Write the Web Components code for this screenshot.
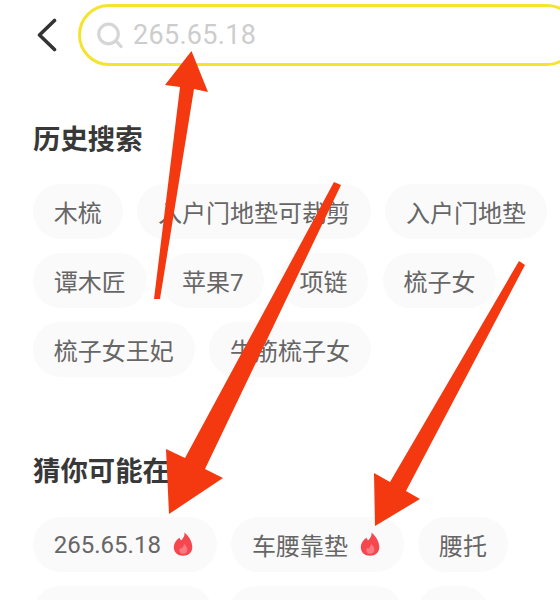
<!DOCTYPE html>
<html lang="zh">
<head>
<meta charset="utf-8">
<title>搜索</title>
<style>
  html, body { margin: 0; height: 600px; overflow: hidden; background: #fff; }
  body { position: relative; font-family: Roboto, "Noto Sans CJK SC", sans-serif; }
</style>
</head>
<body>
<search-bar placeholder="265.65.18"></search-bar>

<tag-section heading="历史搜索" style="--top: 58px">
  <search-chip>木梳</search-chip>
  <search-chip>入户门地垫可裁剪</search-chip>
  <search-chip>入户门地垫</search-chip>
  <search-chip>谭木匠</search-chip>
  <search-chip>苹果7</search-chip>
  <search-chip>项链</search-chip>
  <search-chip>梳子女</search-chip>
  <search-chip>梳子女王妃</search-chip>
  <search-chip>牛筋梳子女</search-chip>
</tag-section>

<tag-section heading="猜你可能在" style="--top: 79px; --gap: 29px">
  <search-chip hot>265.65.18</search-chip>
  <search-chip hot>车腰靠垫</search-chip>
  <search-chip>腰托</search-chip>
  <search-chip style="width: 180px"></search-chip>
  <search-chip style="width: 175px"></search-chip>
  <search-chip style="width: 72px"></search-chip>
</tag-section>

<arrow-overlay></arrow-overlay>

<script>
class SearchBar extends HTMLElement {
  constructor() {
    super();
    this.attachShadow({ mode: "open" });
    this.shadowRoot.innerHTML = `
      <style>
        :host { display: flex; align-items: center; padding: 4px 0 0 37px; height: 62px; }
        .back { flex: none; width: 20px; height: 34px; margin-right: 21px; }
        .box {
          flex: none; box-sizing: border-box; width: 500px; height: 62px;
          display: flex; align-items: center; gap: 10px; padding-left: 16px;
          border: 3px solid #f4e42e; border-radius: 31px;
        }
        .icon { flex: none; width: 26px; height: 27px; }
        .text { font-size: 27px; color: #cdcdcd; letter-spacing: .3px; }
      </style>
      <svg class="back" viewBox="0 0 20 34" fill="none" stroke="#333" stroke-width="3.6" stroke-linecap="round" stroke-linejoin="round">
        <path d="M17.500 2.500 2.500 17 17.500 31.500"/>
      </svg>
      <div class="box">
        <svg class="icon" viewBox="0 0 26 27" fill="none" stroke="#d6d6d6" stroke-width="3.200" stroke-linecap="round">
          <circle cx="11.500" cy="12" r="9.800"/>
          <path d="M19.500 19.500 24 24.500"/>
        </svg>
        <span class="text"></span>
      </div>`;
  }
  connectedCallback() {
    this.shadowRoot.querySelector(".text").textContent = this.getAttribute("placeholder") || "";
  }
}

class TagSection extends HTMLElement {
  constructor() {
    super();
    this.attachShadow({ mode: "open" });
    this.shadowRoot.innerHTML = `
      <style>
        :host { display: block; padding: var(--top, 0) 0 0 33px; }
        h2 { margin: 0 0 var(--gap, 28px); font-size: 27.4px; line-height: 32px; font-weight: 700; color: #383838; }
        .list { display: flex; flex-wrap: wrap; gap: 14px 14.5px; }
      </style>
      <h2></h2>
      <div class="list"><slot></slot></div>`;
  }
  connectedCallback() {
    this.shadowRoot.querySelector("h2").textContent = this.getAttribute("heading") || "";
  }
}

class SearchChip extends HTMLElement {
  constructor() {
    super();
    this.attachShadow({ mode: "open" });
    this.shadowRoot.innerHTML = `
      <style>
        :host {
          display: inline-flex; align-items: center; gap: 12px; box-sizing: border-box;
          height: 55px; padding: 0 20.8px; border-radius: 28px;
          background: #fafafa; color: #666; font-size: 24px; white-space: nowrap;
        }
        svg { flex: none; width: 20px; height: 24px; margin: -2px 3px 0 0; }
      </style>
      <slot></slot>`;
  }
  connectedCallback() {
    if (this.hasAttribute("hot") && !this.shadowRoot.querySelector("svg")) {
      this.shadowRoot.innerHTML += `
        <svg viewBox="0 0 20 24">
          <path fill="#f6474f" d="M11.500 .5C12 4 10 6.500 8 8.500 7.500 7.500 7 6.500 6.300 5.800 3 8.500 .8 11.500 .8 15.300 .8 20.300 4.800 23.800 10 23.800 15.300 23.800 19.300 20.300 19.300 15.300 19.300 9.500 15.800 4 11.500 .5Z"/>
          <path fill="#fa7a80" d="M11 12C11 14 9.500 15.300 8.500 16.800 8 16.300 7.700 16 7.300 15.700 6.500 17 6.200 18 6.500 19.200 7 20.800 8.300 21.800 10.200 21.800 12.600 21.800 14.400 20.200 14.400 17.800 14.400 15.500 13 13.500 11 12Z"/>
        </svg>`;
    }
  }
}

class ArrowOverlay extends HTMLElement {
  constructor() {
    super();
    this.attachShadow({ mode: "open" });
    this.shadowRoot.innerHTML = `
      <style>
        :host { position: absolute; left: 0; top: 0; width: 560px; height: 600px; pointer-events: none; }
        svg { display: block; }
      </style>
      <svg width="560" height="600" viewBox="0 0 560 600" fill="#f4380f">
        <polygon points="154,299 160,299 194,89 208,92 191.500,51 165,85 180,87"/>
        <polygon points="334,182 341,185 205,469 223,478 169,514 166,449 185,458"/>
        <polygon points="519,261 525,265 406,491 420,499 375,526 374,473 390,482"/>
      </svg>`;
  }
}

customElements.define("search-bar", SearchBar);
customElements.define("tag-section", TagSection);
customElements.define("search-chip", SearchChip);
customElements.define("arrow-overlay", ArrowOverlay);
</script>
</body>
</html>
